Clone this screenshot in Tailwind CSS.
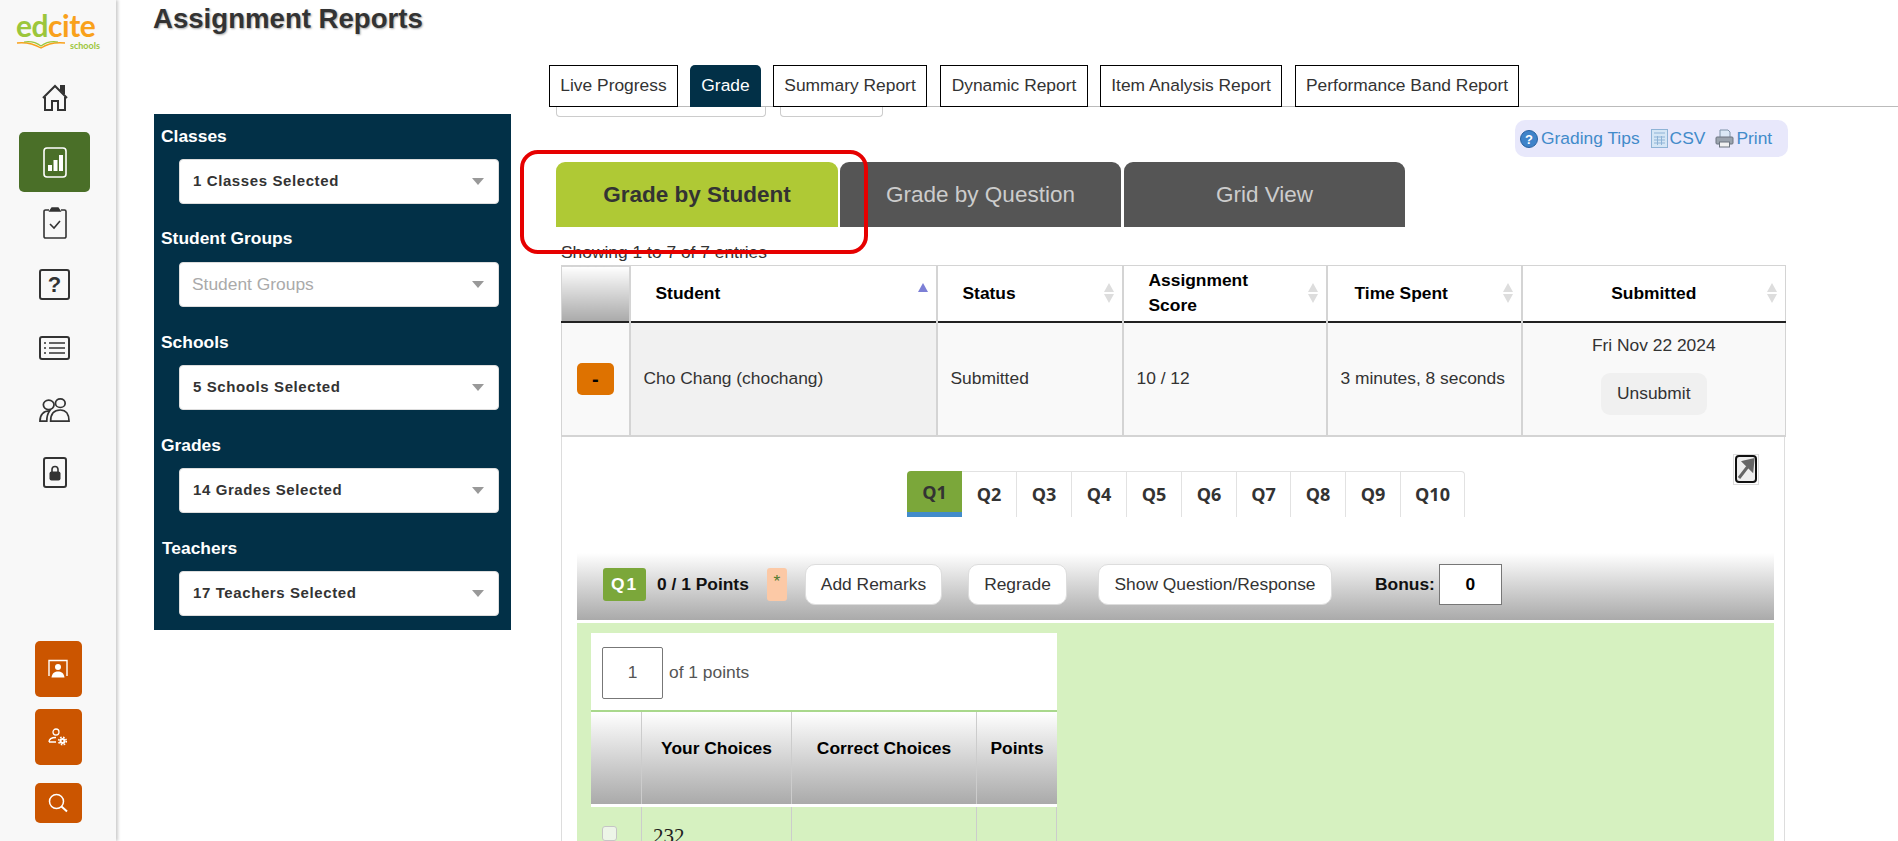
<!DOCTYPE html>
<html lang="en">
<head>
  <meta charset="UTF-8" />
  <title>Assignment Reports</title>
  <script src="https://cdn.jsdelivr.net/npm/@tailwindcss/browser@4"></script>
</head>
<body class="bg-white font-['Liberation_Sans',Arial,sans-serif] text-[#333]">
<div class="relative flex h-[841px] w-[1898px] overflow-hidden">

  <!-- Left nav -->
  <aside class="flex h-full w-[116px] shrink-0 flex-col items-center bg-[#f8f8f8] shadow-[2px_0_3px_#ccc]">
    <div class="relative mt-[12px] h-[39px] w-[84px] shrink-0 self-start ml-[16px]">
      <div class="font-['Lato',sans-serif] text-[30px] leading-[27px] font-bold tracking-[-0.5px]"><span class="text-[#9cc63b]">ed</span><span class="text-[#f9a11b]">cite</span></div>
      <svg class="absolute left-0 top-[29px]" width="50" height="9" viewBox="0 0 50 9" fill="none"><path d="M1 2 C10 1 18 3 25 7 C31 3 39 1 49 2" stroke="#f9a11b" stroke-width="1.4"/><path d="M8 1 C14 0 21 2 25 5 C29 2 36 0 42 1" stroke="#9cc63b" stroke-width="1.2"/></svg>
      <span class="absolute left-[54px] top-[29px] font-['Lato',sans-serif] text-[9px] font-bold leading-[9px] text-[#9cc63b]">schools</span>
    </div>

    <nav class="mr-[7px] flex flex-col items-center">
      <svg class="mt-[33px]" width="28" height="28" viewBox="0 0 28 28" fill="none" stroke="#333" stroke-width="2"><path d="M2 14 L14 2 L26 14 M4 13 V26 H11 V17 H17 V26 H24 V13"/><path d="M20 7 V2 H23 V10" fill="#333"/></svg>
      <div class="mt-[20px] flex h-[60px] w-[71px] items-center justify-center rounded-[5px] bg-[#4a6f28]">
        <svg width="24" height="31" viewBox="0 0 24 31" fill="none"><rect x="1" y="1" width="22" height="29" rx="3" stroke="#fff" stroke-width="1.6"/><rect x="5" y="18" width="4" height="6" fill="#fff"/><rect x="10.5" y="13" width="4" height="11" fill="#fff"/><rect x="16" y="8" width="4" height="16" fill="#fff"/></svg>
      </div>
      <svg class="mt-[15px]" width="24" height="32" viewBox="0 0 24 32" fill="none" stroke="#333" stroke-width="1.6"><path d="M6 3 H2.5 A1.5 1.5 0 0 0 1 4.5 V29.5 A1.5 1.5 0 0 0 2.5 31 H21.5 A1.5 1.5 0 0 0 23 29.5 V4.5 A1.5 1.5 0 0 0 21.5 3 H18"/><path d="M7 4 L9 1 H15 L17 4 Z" fill="#333"/><path d="M7 17 L11 21 L17 14"/></svg>
      <div class="mt-[30px] flex h-[31px] w-[31px] items-center justify-center rounded-[3px] border-2 border-[#333] text-[22px] leading-none font-bold">?</div>
      <svg class="mt-[36px]" width="31" height="24" viewBox="0 0 31 24" fill="none" stroke="#333"><rect x="1" y="1" width="29" height="22" rx="2" stroke-width="2"/><path d="M10 7 H26 M10 12 H26 M10 17 H26 M5 7 H7 M5 12 H7 M5 17 H7" stroke-width="1.5"/></svg>
      <svg class="mt-[38px]" width="31" height="24" viewBox="0 0 32 28" preserveAspectRatio="none" fill="none" stroke="#333" stroke-width="1.8"><circle cx="10" cy="8" r="5.5"/><circle cx="22" cy="6" r="5"/><path d="M1 27 C1 19 5 15 11 15 C9 18 8 22 8 27 Z"/><path d="M12 27 C12 18 16 14 22 14 C28 14 31 19 31 27 Z"/></svg>
      <div class="mt-[35px] flex h-[31px] w-[24px] items-center justify-center rounded-[3px] border-2 border-[#333]">
        <svg width="12" height="16" viewBox="0 0 12 16"><path d="M3 7 V4.5 A3 3 0 0 1 9 4.5 V7" fill="none" stroke="#333" stroke-width="1.6"/><rect x="0.5" y="6.5" width="11" height="9" rx="2" fill="#333"/></svg>
      </div>
    </nav>

    <div class="mt-auto mb-[18px] flex flex-col gap-[12px]">
      <button class="flex h-[56px] w-[47px] items-center justify-center rounded-[5px] bg-[#cb5500]">
        <svg width="22" height="20" viewBox="0 0 22 20" fill="none" stroke="#fff"><path d="M2 17 V1.5 H20 V17" stroke-width="1.4"/><circle cx="11" cy="8" r="3" fill="#fff" stroke="none"/><path d="M4.5 18.5 C5 14 8 12.5 11 12.5 C14 12.5 17 14 17.5 18.5 Z" fill="#fff" stroke="none"/></svg>
      </button>
      <button class="flex h-[56px] w-[47px] items-center justify-center rounded-[5px] bg-[#cb5500]">
        <svg width="20" height="18" viewBox="0 0 20 18" fill="none" stroke="#fff" stroke-width="1.3"><circle cx="8" cy="4" r="3"/><path d="M1 14 C1 11 4 9.5 8 9.5 M1 14 H8"/><circle cx="14.5" cy="13" r="2" stroke-width="2"/><circle cx="14.5" cy="13" r="3.8" stroke-dasharray="1.6 1.4" stroke-width="1.6"/></svg>
      </button>
      <button class="mt-[6px] flex h-[40px] w-[47px] items-center justify-center rounded-[5px] bg-[#cb5500]">
        <svg width="20" height="20" viewBox="0 0 20 20" fill="none" stroke="#fff" stroke-width="1.5"><circle cx="8.5" cy="8.5" r="7"/><path d="M13.5 13.5 L19 18.5" stroke-width="2"/></svg>
      </button>
    </div>
  </aside>

  <main class="min-w-0 flex-1 pl-[38px]">
    <h1 class="-ml-[1px] h-[65px] pt-[4px] text-[27.6px] leading-[30px] font-bold text-[#333] [text-shadow:1px_1px_2px_#aaa]">Assignment Reports</h1>

    <div class="flex">
      <!-- Filters -->
      <div class="mt-[49px] h-[516px] w-[357px] shrink-0 bg-[#023047] pl-[7px] pr-[12px] pt-[12px] text-white">
        <div class="h-[33px] text-[17.4px] leading-[20px] font-bold">Classes</div>
        <div class="mb-[24px] ml-[18px] flex h-[45px] items-center justify-between rounded-[4px] border border-[#ddd] bg-white pl-[13px] pr-[14px] text-[#333]"><span class="text-[15px] font-bold tracking-[0.6px]">1 Classes Selected</span><span class="h-0 w-0 border-x-[6px] border-t-[7px] border-x-transparent border-t-[#999]"></span></div>
        <div class="h-[34px] text-[17.4px] leading-[20px] font-bold">Student Groups</div>
        <div class="mb-[24px] ml-[18px] flex h-[45px] items-center justify-between rounded-[4px] border border-[#ddd] bg-white pl-[12px] pr-[14px] text-[#aaa]"><span class="text-[17.4px]">Student Groups</span><span class="h-0 w-0 border-x-[6px] border-t-[7px] border-x-transparent border-t-[#999]"></span></div>
        <div class="h-[34px] pt-[1px] text-[17.4px] leading-[20px] font-bold">Schools</div>
        <div class="mb-[24px] ml-[18px] flex h-[45px] items-center justify-between rounded-[4px] border border-[#ddd] bg-white pl-[13px] pr-[14px] text-[#333]"><span class="text-[15px] font-bold tracking-[0.6px]">5 Schools Selected</span><span class="h-0 w-0 border-x-[6px] border-t-[7px] border-x-transparent border-t-[#999]"></span></div>
        <div class="h-[34px] pt-[1px] text-[17.4px] leading-[20px] font-bold">Grades</div>
        <div class="mb-[24px] ml-[18px] flex h-[45px] items-center justify-between rounded-[4px] border border-[#ddd] bg-white pl-[13px] pr-[14px] text-[#333]"><span class="text-[15px] font-bold tracking-[0.6px]">14 Grades Selected</span><span class="h-0 w-0 border-x-[6px] border-t-[7px] border-x-transparent border-t-[#999]"></span></div>
        <div class="h-[34px] pl-[1px] pt-[1px] text-[17.4px] leading-[20px] font-bold">Teachers</div>
        <div class="ml-[18px] flex h-[45px] items-center justify-between rounded-[4px] border border-[#ddd] bg-white pl-[13px] pr-[14px] text-[#333]"><span class="text-[15px] font-bold tracking-[0.6px]">17 Teachers Selected</span><span class="h-0 w-0 border-x-[6px] border-t-[7px] border-x-transparent border-t-[#999]"></span></div>
      </div>

      <div class="ml-[38px] min-w-0 flex-1">
        <!-- Report tabs -->
        <div class="flex h-[42px] gap-[12px] border-b border-[#bbb] text-[17.4px]">
          <a class="flex h-[42px] w-[129px] items-center justify-center border border-black bg-white pb-[2px]">Live Progress</a>
          <a class="flex h-[42px] w-[71px] items-center justify-center rounded-t-[5px] bg-[#023047] pb-[2px] text-white">Grade</a>
          <a class="flex h-[42px] w-[154px] items-center justify-center border border-black bg-white pb-[2px]">Summary Report</a>
          <a class="ml-[1px] flex h-[42px] w-[148px] items-center justify-center border border-black bg-white pb-[2px]">Dynamic Report</a>
          <a class="flex h-[42px] w-[182px] items-center justify-center border border-black bg-white pb-[2px]">Item Analysis Report</a>
          <a class="ml-[1px] flex h-[42px] w-[224px] items-center justify-center border border-black bg-white pb-[2px]">Performance Band Report</a>
        </div>
        <div class="flex h-[10px] gap-[14px] pl-[7px]">
          <div class="h-[10px] w-[210px] rounded-b-[4px] border-x border-b border-[#ccc]"></div>
          <div class="h-[10px] w-[103px] rounded-b-[4px] border-x border-b border-[#ccc]"></div>
        </div>

        <!-- Tips -->
        <div class="ml-[966px] mt-[3px] flex h-[37px] w-[273px] items-center rounded-[10px] bg-[#e8e8fb] pl-[5px] text-[17.4px] text-[#428bca]">
          <svg width="18" height="18" viewBox="0 0 18 18"><circle cx="9" cy="9" r="8.5" fill="#3f83c9" stroke="#2a62a0"/><text x="9" y="13.5" text-anchor="middle" font-size="13" font-weight="700" fill="#fff" font-family="Liberation Sans">?</text></svg>
          <span class="ml-[3px]">Grading Tips</span>
          <svg class="ml-[11px]" width="17" height="19" viewBox="0 0 17 19"><rect x="0.5" y="0.5" width="16" height="18" fill="#d5e6f5" stroke="#8eb3d6"/><path d="M3 4 H14 M3 8 H14 M3 11 H14 M3 14 H14 M6.5 7 V16 M10.5 7 V16" stroke="#8eb3d6"/></svg>
          <span class="ml-[2px]">CSV</span>
          <svg class="ml-[10px]" width="19" height="19" viewBox="0 0 19 19"><path d="M5 1 H13 L15 3 V9 H5 Z" fill="#dbe8f5" stroke="#7f93a8"/><rect x="1" y="8" width="17" height="7" rx="1" fill="#9aa3ad" stroke="#6c7580"/><rect x="4.5" y="13" width="10" height="5" fill="#f2f2f2" stroke="#6c7580"/></svg>
          <span class="ml-[2px]">Print</span>
        </div>

        <!-- Grade sub tabs -->
        <div class="ml-[7px] mt-[5px] flex h-[65px] gap-[2px] text-[22.5px]">
          <a class="flex w-[282px] items-center justify-center rounded-t-[9px] bg-[#afc935] font-bold text-[#333]">Grade by Student</a>
          <a class="flex w-[281px] items-center justify-center rounded-t-[9px] bg-[#555] text-[#ccc]">Grade by Question</a>
          <a class="ml-[1px] flex w-[281px] items-center justify-center rounded-t-[9px] bg-[#555] text-[#ccc]">Grid View</a>
        </div>

        <div class="ml-[12px] mt-[15px] h-[23px] text-[17.4px] leading-[20px]">Showing 1 to 7 of 7 entries</div>

        <!-- Students table -->
        <div class="ml-[12px] w-[1224px]">
          <table class="w-full table-fixed border-collapse text-[17.4px]">
            <colgroup>
              <col class="w-[68px]"><col class="w-[307px]"><col class="w-[186px]"><col class="w-[204px]"><col class="w-[195px]"><col class="w-[264px]">
            </colgroup>
            <thead>
              <tr class="h-[56px] border-b-2 border-[#222] text-black">
                <th class="border-x-2 border-l border-t border-[#d4d4d4] bg-linear-to-b from-white to-[#aaa]"></th>
                <th class="border-x-2 border-t border-[#d4d4d4] pl-[25px] pr-[8px] text-left font-bold">
                  <div class="flex items-start justify-between"><span>Student</span><svg class="mt-[3px]" width="10" height="10" viewBox="0 0 10 10"><path d="M5 0 L10 9 H0 Z" fill="#7c7fd6"/></svg></div>
                </th>
                <th class="border-x-2 border-t border-[#d4d4d4] pl-[25px] pr-[8px] text-left font-bold">
                  <div class="flex items-center justify-between"><span>Status</span><svg width="10" height="20" viewBox="0 0 10 20" fill="#ddd"><path d="M5 0 L10 9 H0 Z M5 20 L0 11 H10 Z"/></svg></div>
                </th>
                <th class="border-x-2 border-t border-[#d4d4d4] pl-[25px] pr-[8px] text-left font-bold leading-[25px]">
                  <div class="flex items-center justify-between"><span>Assignment<br>Score</span><svg width="10" height="20" viewBox="0 0 10 20" fill="#ddd"><path d="M5 0 L10 9 H0 Z M5 20 L0 11 H10 Z"/></svg></div>
                </th>
                <th class="border-x-2 border-t border-[#d4d4d4] pl-[27px] pr-[8px] text-left font-bold">
                  <div class="flex items-center justify-between"><span>Time Spent</span><svg width="10" height="20" viewBox="0 0 10 20" fill="#ddd"><path d="M5 0 L10 9 H0 Z M5 20 L0 11 H10 Z"/></svg></div>
                </th>
                <th class="border-x-2 border-r border-t border-[#d4d4d4] pl-[18px] pr-[8px] font-bold">
                  <div class="flex items-center justify-between"><span class="flex-1 text-center">Submitted</span><svg width="10" height="20" viewBox="0 0 10 20" fill="#ddd"><path d="M5 0 L10 9 H0 Z M5 20 L0 11 H10 Z"/></svg></div>
                </th>
              </tr>
            </thead>
            <tbody>
              <tr class="h-[114px] border-b-2 border-[#d4d4d4] bg-[#f9f9f9]">
                <td class="border-x-2 border-l border-[#d4d4d4] text-center">
                  <button class="h-[32px] w-[37px] rounded-[5px] bg-[#de7200] text-[20px] font-bold leading-none text-black">-</button>
                </td>
                <td class="border-x-2 border-[#d4d4d4] bg-[#f1f1f1] pl-[13px]">Cho Chang (chochang)</td>
                <td class="border-x-2 border-[#d4d4d4] pl-[13px]">Submitted</td>
                <td class="border-x-2 border-[#d4d4d4] pl-[13px]">10 / 12</td>
                <td class="border-x-2 border-[#d4d4d4] pl-[13px]">3 minutes, 8 seconds</td>
                <td class="border-x-2 border-r border-[#d4d4d4] pt-[10px] text-center align-top">
                  <div class="mb-[16px] leading-[24px]">Fri Nov 22 2024</div>
                  <button class="h-[42px] w-[106px] rounded-[9px] bg-[#f0f0f0]">Unsubmit</button>
                </td>
              </tr>
            </tbody>
          </table>

          <!-- Expanded row -->
          <div class="relative h-[420px] border-x border-[#ddd] pt-[34px]">
            <button class="absolute left-[1171px] top-[17px] flex h-[31px] w-[26px] items-center justify-center border border-[#ddd] bg-white">
              <svg width="22" height="28" viewBox="0 0 22 28"><rect x="1" y="1" width="20" height="26" rx="3" fill="#eee" stroke="#111" stroke-width="2"/><path d="M4 23 L14 10 M9 7 L18 5 L17 15 Z" stroke="#666" stroke-width="3" fill="#666"/></svg>
            </button>

            <div class="ml-[345px] flex h-[46px] w-[558px] font-['Open_Sans',sans-serif] text-[18px] font-bold text-[#333]">
              <a class="flex w-[55px] items-center justify-center rounded-tl-[4px] border-b-[5px] border-[#428bca] bg-[#7ba73a] pt-[2px]">Q1</a>
              <a class="flex w-[55px] items-center justify-center border-r border-t border-[#e2e2e2]">Q2</a>
              <a class="flex w-[55px] items-center justify-center border-r border-t border-[#e2e2e2]">Q3</a>
              <a class="flex w-[55px] items-center justify-center border-r border-t border-[#e2e2e2]">Q4</a>
              <a class="flex w-[55px] items-center justify-center border-r border-t border-[#e2e2e2]">Q5</a>
              <a class="flex w-[55px] items-center justify-center border-r border-t border-[#e2e2e2]">Q6</a>
              <a class="flex w-[54px] items-center justify-center border-r border-t border-[#e2e2e2]">Q7</a>
              <a class="flex w-[55px] items-center justify-center border-r border-t border-[#e2e2e2]">Q8</a>
              <a class="flex w-[55px] items-center justify-center border-r border-t border-[#e2e2e2]">Q9</a>
              <a class="flex w-[64px] items-center justify-center rounded-tr-[4px] border-r border-t border-[#e2e2e2]">Q10</a>
            </div>

            <!-- Question toolbar -->
            <div class="ml-[15px] mt-[36px] flex h-[67px] w-[1197px] items-center bg-linear-to-b from-white to-[#aaa] pb-[3px] pl-[26px] text-[17.4px]">
              <span class="flex h-[33px] w-[43px] items-center justify-center rounded-[3px] bg-[#7ba73a] font-bold tracking-[2px] text-white">Q1</span>
              <b class="ml-[11px] w-[110px] text-[#111]">0 / 1 Points</b>
              <span class="h-[33px] w-[20px] rounded-[3px] bg-[#fcc9a6] pt-[3px] text-center leading-[20px] text-[#4f7a30]">*</span>
              <button class="ml-[18px] h-[41px] w-[137px] rounded-[10px] border border-[#ddd] bg-white">Add Remarks</button>
              <button class="ml-[26px] h-[41px] w-[99px] rounded-[10px] border border-[#ddd] bg-white">Regrade</button>
              <button class="ml-[31px] h-[41px] w-[234px] rounded-[10px] border border-[#ddd] bg-white">Show Question/Response</button>
              <b class="ml-[43px] text-[#111]">Bonus:</b>
              <input class="ml-[4px] h-[41px] w-[63px] border border-[#777] bg-white text-center font-bold text-black" value="0">
            </div>

            <!-- Question body -->
            <div class="ml-[15px] mt-[3px] h-[240px] w-[1197px] bg-[#d6f1c0] pl-[14px] pt-[10px]">
              <div class="w-[466px]">
                <div class="flex h-[79px] items-start border-b-2 border-[#a9d88c] bg-white pl-[11px] pt-[14px] text-[17.4px] text-[#555]">
                  <input class="h-[52px] w-[61px] rounded-[2px] border border-[#777] text-center text-[#555]" value="1">
                  <span class="ml-[6px] mt-[12px]">of 1 points</span>
                </div>
                <div class="grid h-[92px] grid-cols-[51px_150px_185px_80px] bg-linear-to-b from-white to-[#aaa] text-[17.4px] font-bold text-black">
                  <div class="border-r border-[#ccc]"></div>
                  <div class="border-r border-[#ccc] pt-[23px] text-center">Your Choices</div>
                  <div class="border-r border-[#ccc] pt-[23px] text-center">Correct Choices</div>
                  <div class="pt-[23px] text-center">Points</div>
                </div>
                <div class="h-[3px] bg-white"></div>
                <div class="grid h-[60px] grid-cols-[51px_150px_185px_80px] border-r border-[#ccc]">
                  <div class="border-r border-[#ccc] pl-[11px] pt-[19px]"><div class="h-[15px] w-[15px] rounded-[3px] border border-[#c5c5c5] bg-[#edf5e8]"></div></div>
                  <div class="border-r border-[#ccc] pl-[11px] pt-[17px] font-['Liberation_Serif',serif] text-[21px] leading-[24px] text-[#222]">232</div>
                  <div class="border-r border-[#ccc]"></div>
                  <div></div>
                </div>
              </div>
            </div>
          </div>
        </div>
      </div>
    </div>
  </main>

  <!-- Red annotation box from the screenshot -->
  <div class="pointer-events-none absolute left-[520px] top-[150px] h-[104px] w-[348px] rounded-[18px] border-[4px] border-[#e60000]"></div>
</div>
</body>
</html>
